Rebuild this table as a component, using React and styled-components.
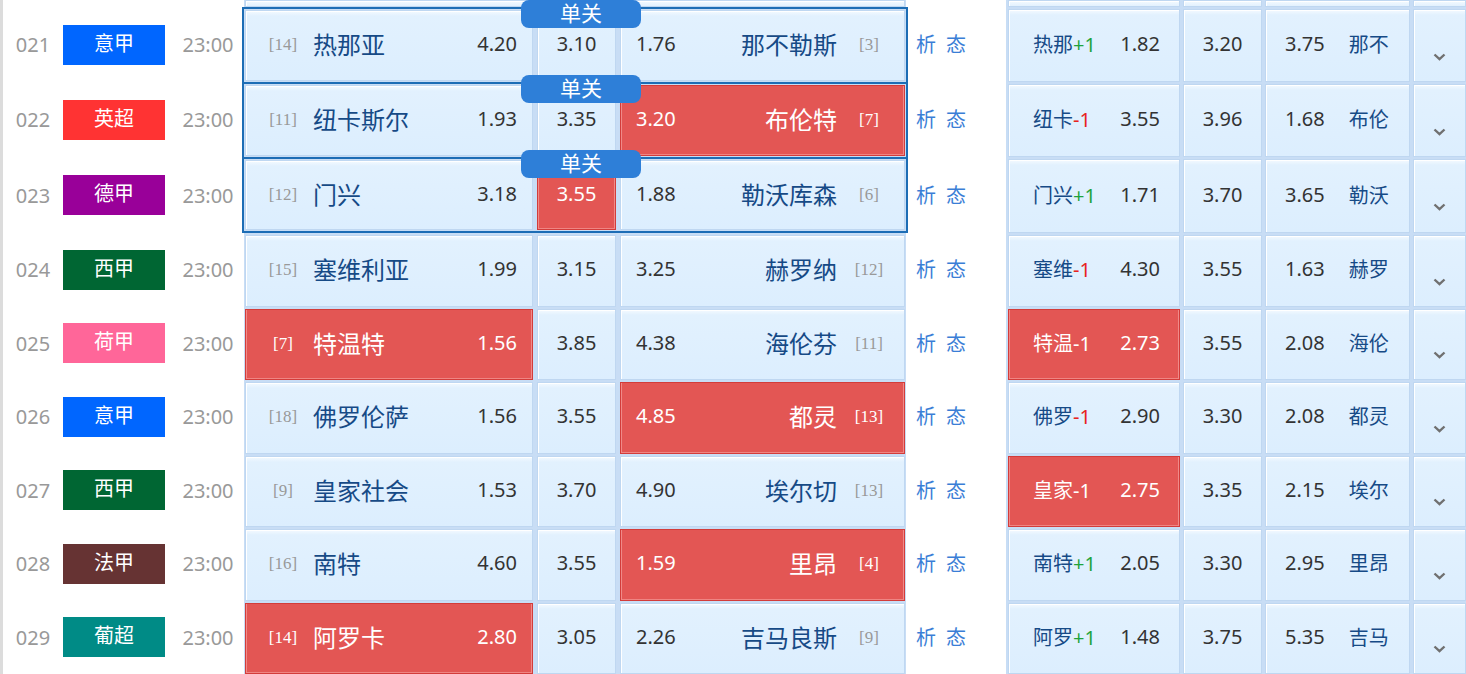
import React from "react";
import styled, { createGlobalStyle } from "styled-components";

const GlobalStyle = createGlobalStyle`
  html, body {
    margin: 0;
    padding: 0;
    background: #fff;
    overflow: hidden;
  }
  body {
    font-family: "Noto Sans", "Noto Sans CJK SC", sans-serif;
  }
`;

const LINE = "#c8ddf5";

const Page = styled.div`
  width: 1466px;
  height: 674px;
  overflow: hidden;
  box-sizing: border-box;
  border-left: 3px solid #dcdcdc;
`;

const Row = styled.div`
  display: grid;
  grid-template-columns: 60px 102px 77px 666px 98px 460px;
  height: ${(p) => p.$h}px;
`;

const Num = styled.div`
  display: flex;
  align-items: center;
  justify-content: center;
  color: #999;
  font-size: 20px;
`;

const BadgeCol = styled.div`
  display: flex;
  align-items: center;
`;

const Badge = styled.div`
  width: 102px;
  height: 40px;
  line-height: 38px;
  text-align: center;
  color: #fff;
  font-size: 20px;
  background: ${(p) => p.$color};
`;

const Time = styled.div`
  display: flex;
  align-items: center;
  justify-content: center;
  padding-left: 9px;
  color: #999;
  font-size: 20px;
`;

const Block = styled.div`
  position: relative;
  display: grid;
  grid-template-columns: 288px 79px 285px;
  column-gap: 4px;
  box-sizing: border-box;
  background: ${LINE};
  border-left: 2px solid ${(p) => (p.$single ? "#1d6db5" : "#fff")};
  border-right: 2px solid ${(p) => (p.$single ? "#1d6db5" : "#fff")};
  border-top: ${(p) => (p.$single ? "2px solid #1d6db5" : "0")};
  border-bottom: ${(p) => (p.$last ? "2px solid #1d6db5" : "0")};
  padding: ${(p) => (p.$single ? "1px 1px 1px" : "2px 1px 0")};
  padding-top: ${(p) => (p.$cut ? "0" : undefined)};
`;

const Tab = styled.div`
  position: absolute;
  z-index: 2;
  top: -9px;
  left: 277px;
  width: 120px;
  height: 28px;
  line-height: 26px;
  border-radius: 8px;
  background: #2e7fd8;
  color: #fff;
  font-size: 21px;
  text-align: center;
`;

const Cell = styled.div`
  display: flex;
  align-items: center;
  justify-content: ${(p) => (p.$center ? "center" : "flex-start")};
  box-sizing: border-box;
  min-width: 0;
  padding-top: ${(p) => p.$pt || 0}px;
  padding-bottom: ${(p) => (p.$pt ? 0 : 4)}px;
  background: ${(p) =>
    p.$hot
      ? "#e35654"
      : "linear-gradient(#f4faff 0, #e2f1fe 5px, #dceefe 100%)"};
  border: 1px solid ${(p) => (p.$hot ? "#d33c3a" : "#bfd7f1")};
  box-shadow: ${(p) =>
    p.$hot
      ? "inset 1px 0 0 #f08a88, inset -1px 0 0 #f08a88, inset 0 -1px 0 #ef8583"
      : "inset 1px 1px 0 #fff"};
  color: ${(p) => (p.$hot ? "#fff" : "#333")};
  font-size: 20px;
`;

const Seed = styled.span`
  flex: none;
  width: 50px;
  margin-left: ${(p) => p.$ml || 0}px;
  margin-right: ${(p) => p.$mr || 0}px;
  padding-top: 3px;
  text-align: center;
  font-family: "Liberation Serif", serif;
  font-size: 17px;
  color: ${(p) => (p.$hot ? "#fff" : "#999")};
`;

const Team = styled.span`
  font-size: 24px;
  color: ${(p) => (p.$hot ? "#fff" : "#164a86")};
  margin-left: ${(p) => p.$ml || "0"};
`;

const Odds = styled.span`
  margin-left: ${(p) => p.$ml || "0"};
  padding-left: ${(p) => p.$pl || 0}px;
  padding-right: ${(p) => p.$pr || 0}px;
`;

const Analysis = styled.div`
  display: flex;
  align-items: center;
  gap: 10px;
  padding-left: 8px;
  padding-bottom: 2px;
  color: #3a7ed6;
  font-size: 20px;
`;

const RightBlock = styled.div`
  display: grid;
  grid-template-columns: 172px 79px 145px 1fr;
  column-gap: 3px;
  box-sizing: border-box;
  background: ${LINE};
  border-left: 2px solid ${LINE};
  padding-top: ${(p) => (p.$cut ? 0 : 2)}px;
`;

const HcpLabel = styled.span`
  padding-left: 24px;
  color: ${(p) => (p.$hot ? "#fff" : "#164a86")};
`;

const Sign = styled.span`
  color: ${(p) => (p.$hot ? "#fff" : p.$plus ? "#1ea33c" : "#e8231f")};
`;

const ShortName = styled.span`
  margin-left: 24px;
  color: #164a86;
`;

const Chevron = () => (
  <svg width="13" height="8" viewBox="0 0 13 8">
    <path d="M1.5 1.5 L6.5 6.2 L11.5 1.5" stroke="#707070" strokeWidth="2.4" fill="none" />
  </svg>
);

const matches = [
  { no: "021", lg: "意甲", c: "#0066ff", hs: 14, home: "热那亚", h: "4.20", d: "3.10", a: "1.76", away: "那不勒斯", as: 3, single: true, hn: "热那", hc: "+1", r1: "1.82", r2: "3.20", r3: "3.75", an: "那不" },
  { no: "022", lg: "英超", c: "#ff3333", hs: 11, home: "纽卡斯尔", h: "1.93", d: "3.35", a: "3.20", away: "布伦特", as: 7, hot: "a", single: true, hn: "纽卡", hc: "-1", r1: "3.55", r2: "3.96", r3: "1.68", an: "布伦" },
  { no: "023", lg: "德甲", c: "#990099", hs: 12, home: "门兴", h: "3.18", d: "3.55", a: "1.88", away: "勒沃库森", as: 6, hot: "d", single: true, last: true, hn: "门兴", hc: "+1", r1: "1.71", r2: "3.70", r3: "3.65", an: "勒沃" },
  { no: "024", lg: "西甲", c: "#006633", hs: 15, home: "塞维利亚", h: "1.99", d: "3.15", a: "3.25", away: "赫罗纳", as: 12, hn: "塞维", hc: "-1", r1: "4.30", r2: "3.55", r3: "1.63", an: "赫罗" },
  { no: "025", lg: "荷甲", c: "#ff6699", hs: 7, home: "特温特", h: "1.56", d: "3.85", a: "4.38", away: "海伦芬", as: 11, hot: "h", rhot: true, hn: "特温", hc: "-1", r1: "2.73", r2: "3.55", r3: "2.08", an: "海伦" },
  { no: "026", lg: "意甲", c: "#0066ff", hs: 18, home: "佛罗伦萨", h: "1.56", d: "3.55", a: "4.85", away: "都灵", as: 13, hot: "a", hn: "佛罗", hc: "-1", r1: "2.90", r2: "3.30", r3: "2.08", an: "都灵" },
  { no: "027", lg: "西甲", c: "#006633", hs: 9, home: "皇家社会", h: "1.53", d: "3.70", a: "4.90", away: "埃尔切", as: 13, rhot: true, hn: "皇家", hc: "-1", r1: "2.75", r2: "3.35", r3: "2.15", an: "埃尔" },
  { no: "028", lg: "法甲", c: "#663333", hs: 16, home: "南特", h: "4.60", d: "3.55", a: "1.59", away: "里昂", as: 4, hot: "a", hn: "南特", hc: "+1", r1: "2.05", r2: "3.30", r3: "2.95", an: "里昂" },
  { no: "029", lg: "葡超", c: "#008b86", hs: 14, home: "阿罗卡", h: "2.80", d: "3.05", a: "2.26", away: "吉马良斯", as: 9, hot: "h", hn: "阿罗", hc: "+1", r1: "1.48", r2: "3.75", r3: "5.35", an: "吉马" },
];

const heights = [75, 75, 76, 73.5, 73.5, 73.5, 73.5, 73.5, 73.5];

const MatchRow = ({ m, h }) => (
  <Row $h={h}>
    <Num>{m.no}</Num>
    <BadgeCol>
      <Badge $color={m.c}>{m.lg}</Badge>
    </BadgeCol>
    <Time>23:00</Time>
    <Block $single={m.single} $last={m.last}>
      {m.single && <Tab>单关</Tab>}
      <Cell $hot={m.hot === "h"}>
        <Seed $ml={12} $hot={m.hot === "h"}>[{m.hs}]</Seed>
        <Team $ml="5px" $hot={m.hot === "h"}>{m.home}</Team>
        <Odds $ml="auto" $pr={15}>{m.h}</Odds>
      </Cell>
      <Cell $center $hot={m.hot === "d"}>{m.d}</Cell>
      <Cell $hot={m.hot === "a"}>
        <Odds $pl={15}>{m.a}</Odds>
        <Team $ml="auto" $hot={m.hot === "a"}>{m.away}</Team>
        <Seed $ml={7} $mr={10} $hot={m.hot === "a"}>[{m.as}]</Seed>
      </Cell>
    </Block>
    <Analysis>
      <span>析</span>
      <span>态</span>
    </Analysis>
    <RightBlock>
      <Cell $hot={m.rhot}>
        <HcpLabel $hot={m.rhot}>
          {m.hn}
          <Sign $plus={m.hc[0] === "+"} $hot={m.rhot}>{m.hc}</Sign>
        </HcpLabel>
        <Odds $ml="auto" $pr={19}>{m.r1}</Odds>
      </Cell>
      <Cell $center>{m.r2}</Cell>
      <Cell>
        <Odds $pl={19}>{m.r3}</Odds>
        <ShortName>{m.an}</ShortName>
      </Cell>
      <Cell $center $pt={22}>
        <Chevron />
      </Cell>
    </RightBlock>
  </Row>
);

const CutRow = () => (
  <Row $h={7}>
    <div />
    <div />
    <div />
    <Block $cut>
      <Cell />
      <Cell />
      <Cell />
    </Block>
    <div />
    <RightBlock $cut>
      <Cell />
      <Cell />
      <Cell />
      <Cell />
    </RightBlock>
  </Row>
);

const App = () => (
  <>
    <GlobalStyle />
    <Page>
      <CutRow />
      {matches.map((m, i) => (
        <MatchRow key={m.no} m={m} h={heights[i]} />
      ))}
    </Page>
  </>
);

export default App;
